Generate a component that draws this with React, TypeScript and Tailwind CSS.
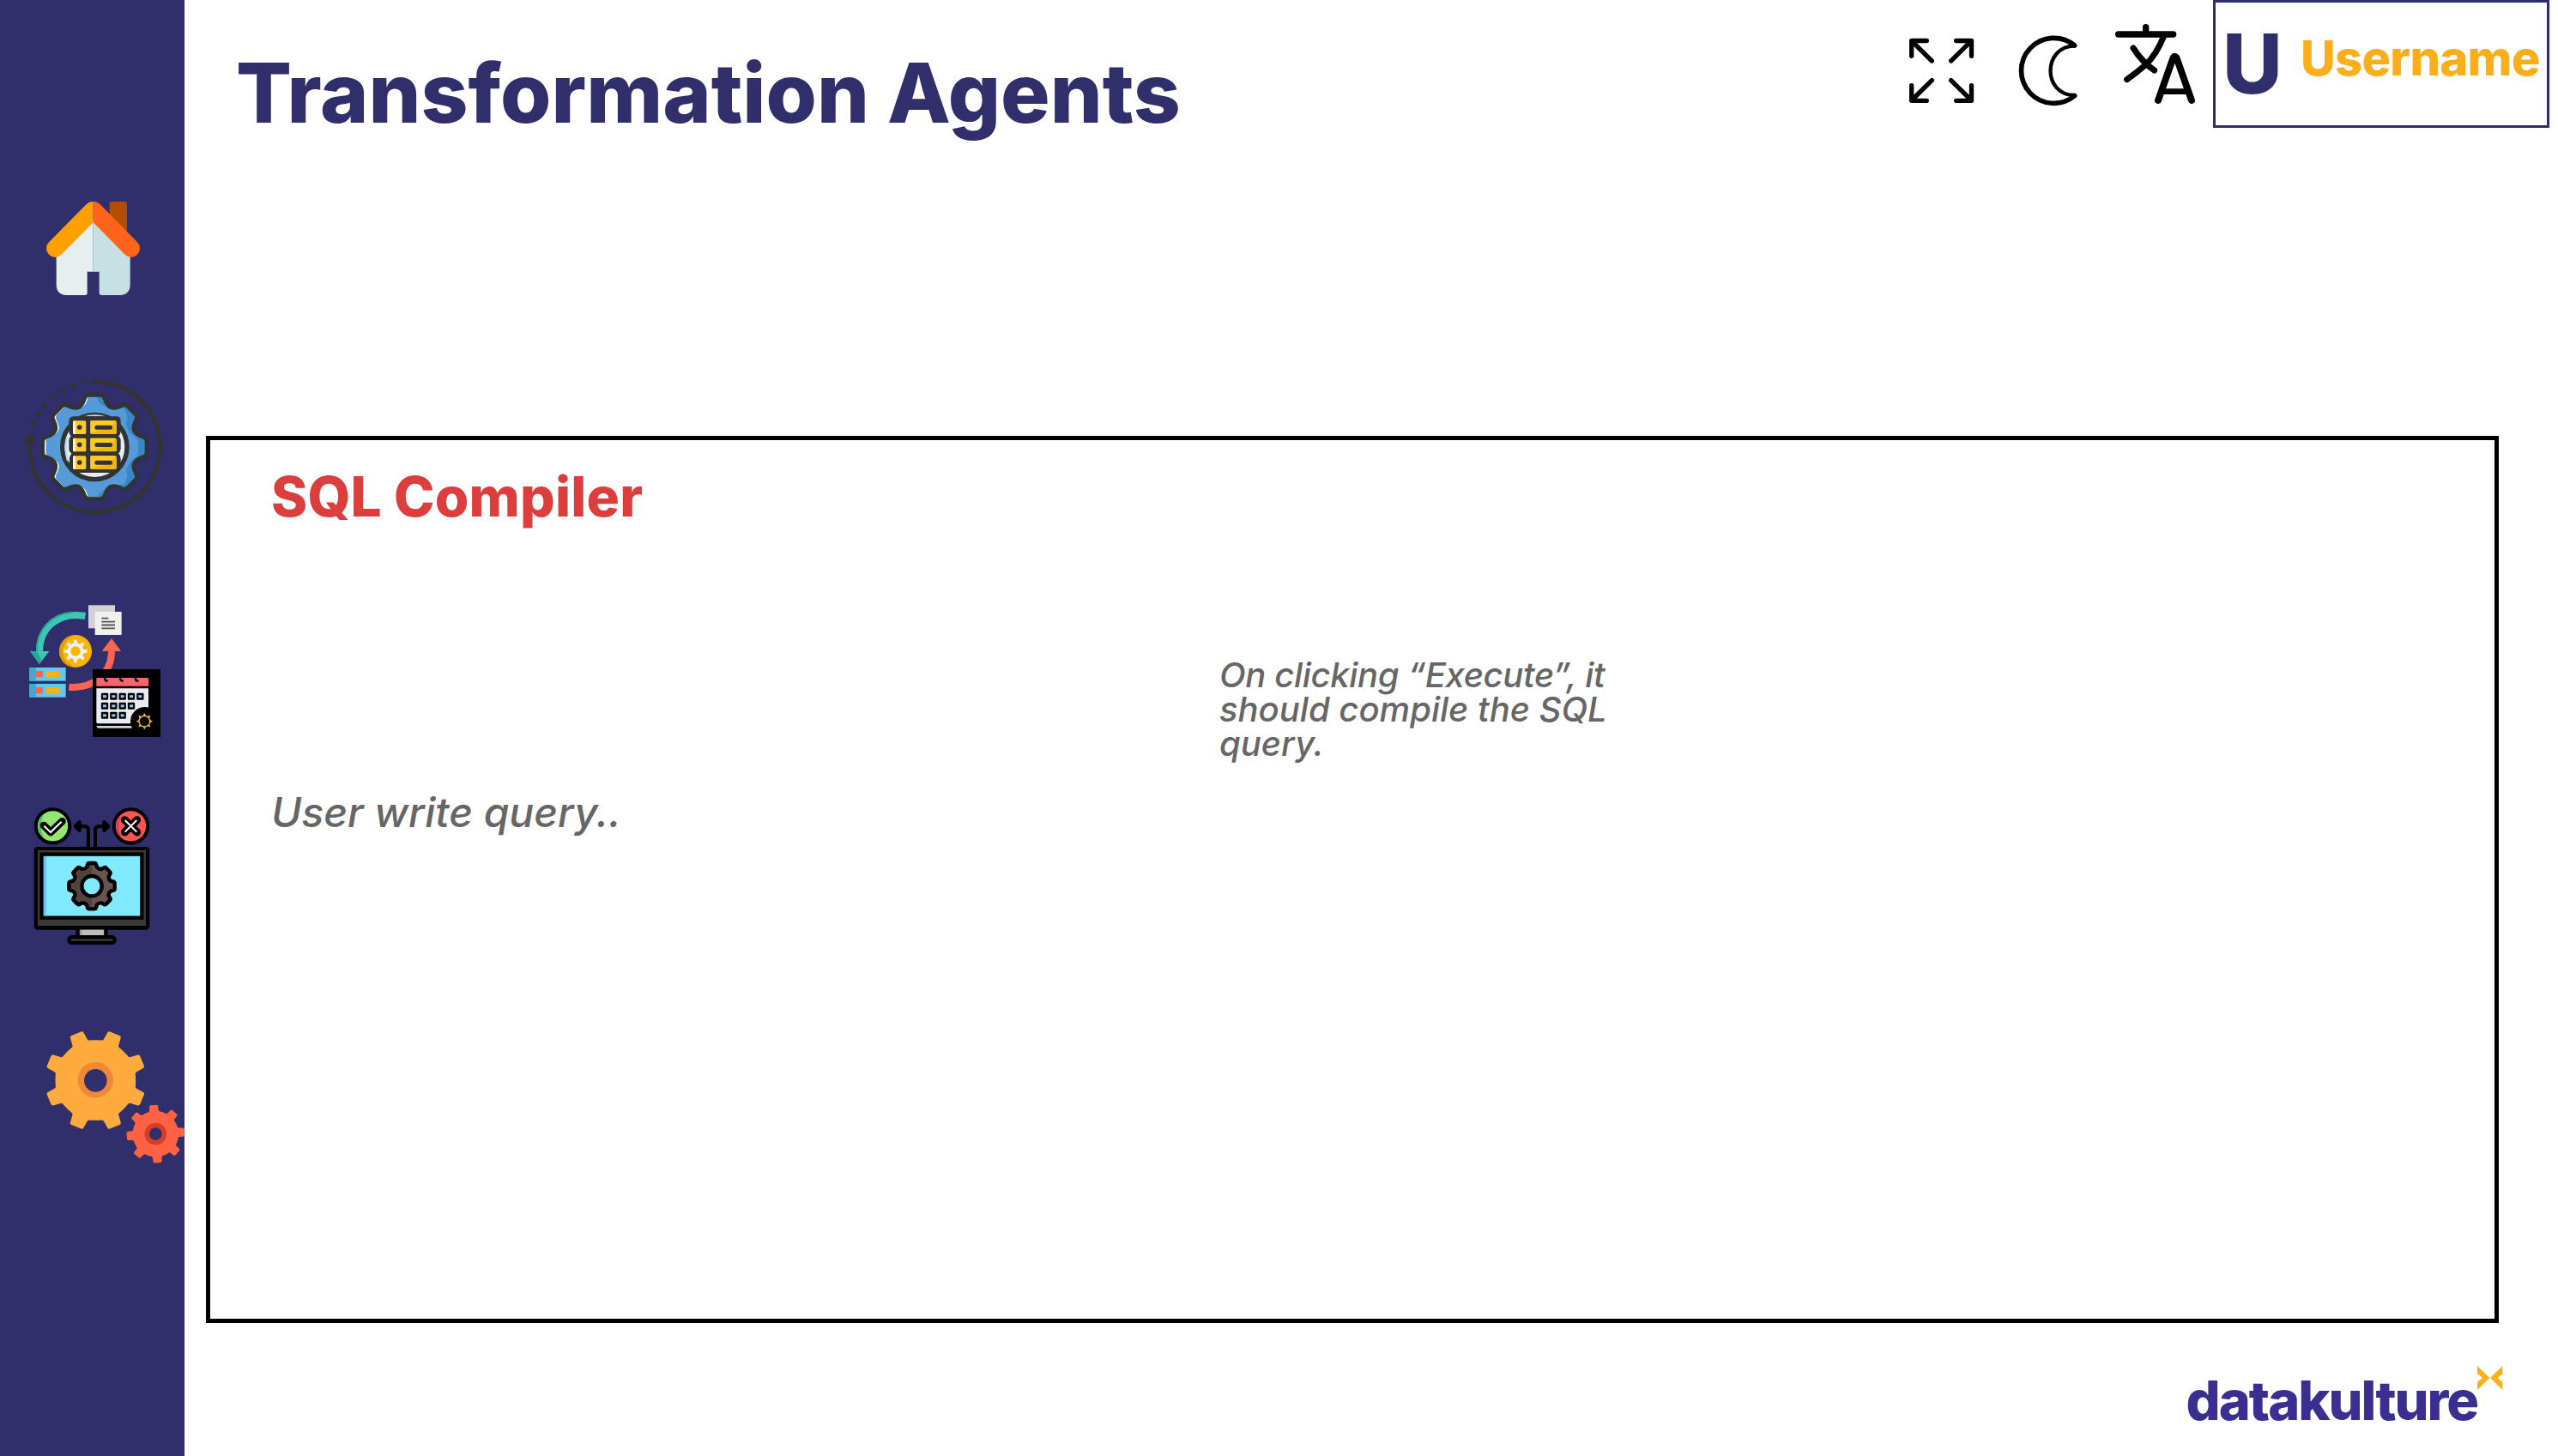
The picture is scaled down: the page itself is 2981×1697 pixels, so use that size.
import type { ReactNode } from "react";

type Seg = [string, ...number[]];

// Repeats a tooth outline (drawn pointing up, around the origin) n times around a centre.
function gear(cx: number, cy: number, n: number, offset: number, segs: Seg[]) {
  let d = "";
  for (let i = 0; i < n; i++) {
    const a = ((offset + (i * 360) / n) * Math.PI) / 180;
    segs.forEach(([cmd, ...p], j) => {
      d += i === 0 && j === 0 ? "M" : cmd;
      for (let k = 0; k < p.length; k += 2) {
        const x = p[k] * Math.cos(a) - p[k + 1] * Math.sin(a) + cx;
        const y = p[k] * Math.sin(a) + p[k + 1] * Math.cos(a) + cy;
        d += `${x.toFixed(2)} ${y.toFixed(2)} `;
      }
    });
  }
  return d + "Z";
}

const waveGear = gear(331, 303, 8, 0, [
  ["L", -36, -168],
  ["Q", -32, -182, -20, -182],
  ["L", 20, -182],
  ["Q", 32, -182, 36, -168],
  ["C", 46, -136, 63.7, -128.7, 93.3, -144.3],
]);

const monitorGear = gear(321, 338, 8, 0, [
  ["L", -18, -66],
  ["L", -15, -76],
  ["Q", -14, -80, -9, -80],
  ["L", 9, -80],
  ["Q", 14, -80, 15, -76],
  ["L", 18, -66],
  ["Q", 24, -58, 34, -59],
]);

const bigGear = gear(334, 237, 8, 22.5, [
  ["L", -33, -137],
  ["Q", -28, -139, -28, -144],
  ["L", -25, -170],
  ["Q", -24, -176, -18, -176],
  ["L", 18, -176],
  ["Q", 24, -176, 25, -170],
  ["L", 28, -144],
  ["Q", 28, -139, 33, -137],
  ["Q", 51, -132, 73, -121],
]);

const smallGear = gear(544, 425, 8, -4, [
  ["L", -19, -78],
  ["Q", -16, -79, -16, -83],
  ["L", -15, -97],
  ["Q", -14, -101, -10, -101],
  ["L", 10, -101],
  ["Q", 14, -101, 15, -97],
  ["L", 16, -83],
  ["Q", 16, -79, 19, -78],
  ["Q", 30, -75, 41, -69],
]);

function SideIcon({ h, children }: { h: number; children: ReactNode }) {
  return (
    <svg className="block w-[215px] shrink-0" viewBox={`0 0 645 ${h}`}>
      {children}
    </svg>
  );
}

function HomeIcon() {
  return (
    <SideIcon h={540}>
      <path d="M383 112Q383 105 390 105H437Q444 105 444 112V225L383 165Z" fill="#b34e00" />
      <path d="M197 290L326 165V348H305V424Q305 432 297 432H232Q197 429 197 395Z" fill="#e7efee" />
      <path d="M326 165L455 290V395Q455 429 420 432H355Q347 432 347 424V348H326Z" fill="#c6e0e4" />
      <path d="M326 104Q313 104 303 113L171 247A30 30 0 0 0 214 290L326 178Z" fill="#ff9f00" />
      <path d="M326 104Q339 104 349 113L480 247A30 30 0 0 1 437 290L326 178Z" fill="#ff641a" />
      <path d="M304 349.500H348" stroke="#a9b4bd" strokeWidth="3" />
    </SideIcon>
  );
}

function DataIcon() {
  return (
    <SideIcon h={600}>
      <defs>
        <clipPath id="wave">
          <path d={waveGear} />
        </clipPath>
        <clipPath id="lit">
          <path d="M140 100H336Q337 130 345 145Q355 160 385 168H430Q450 185 440 222Q450 262 480 275Q488 303 480 335Q450 350 440 385Q450 410 430 435H395Q345 450 332 500H140Z" />
        </clipPath>
      </defs>
      <path d="M331 75A228 228 0 1 1 104 303V266" fill="none" stroke="#333" strokeWidth="15" strokeLinecap="round" />
      <path d="M88 280L104 264L120 280" fill="none" stroke="#333" strokeWidth="14" strokeLinecap="round" strokeLinejoin="round" />
      <g stroke="#333" strokeWidth="15" strokeLinecap="round">
        <path d="M294 78L300 77M253 89L260 86M215 107L221 103M182 130L187 126M154 160L158 155M134 190L138 184M116 225L119 219" />
      </g>
      <g clipPath="url(#wave)">
        <path d={waveGear} fill="#fff" />
        <path d={waveGear} fill="#3787ca" transform="translate(12 0)" />
        <rect x="400" y="120" width="120" height="370" fill="#3787ca" />
        <g clipPath="url(#lit)">
          <path d={waveGear} fill="#559bd7" transform="translate(12 0)" />
          <rect x="350" y="120" width="170" height="370" fill="#559bd7" />
        </g>
      </g>
      <path d={waveGear} fill="none" stroke="#333" strokeWidth="14" strokeLinejoin="round" />
      <circle cx="331" cy="303" r="113" fill="#e3edf8" stroke="#333" strokeWidth="16" />
      <path d="M292 196Q331 183 370 196Z" fill="#b9d9f2" />
      <path d="M240 270Q224 303 241 350L233 350Q220 303 232 266Z" fill="#b9d9f2" />
      <path d="M258 196H406Q422 196 422 212V250Q420 262 414 265Q422 270 422 282V310Q420 322 414 325Q422 332 422 345V378L400 393H262L243 378V340L250 325Q241 320 241 310V280Q242 270 248 265Q241 258 241 246V212Q242 197 258 196Z" fill="#333" />
      {[210, 271, 333].map((y) => (
        <g key={y} transform={`translate(0 ${y})`}>
          <rect x="255" y="1" width="46" height="47" rx="5" fill="#ffc928" />
          <path d="M263 1H260Q255 1 255 6V43Q255 48 260 48H264Z" fill="#f6f1e4" />
          <rect x="316" y="1" width="92" height="47" rx="5" fill="#efb70a" />
          <path d="M316 1H403Q402 16 380 19L360 34Q340 36 318 46H316Z" fill="#ffc928" />
          <circle cx="278" cy="24" r="8.500" fill="#333" />
          <rect x="331" y="17" width="62" height="15" rx="7.500" fill="#333" />
        </g>
      ))}
    </SideIcon>
  );
}

function FlowIcon() {
  return (
    <SideIcon h={600}>
      <path d="M298 114C210 98 139 150 138 238" fill="none" stroke="#3ec6b4" strokeWidth="24" />
      <path d="M250 101C178 107 126 165 129 238" fill="none" stroke="#23a896" strokeWidth="6" />
      <path d="M105 237H172L138 282Z" fill="#3ec6b4" />
      <path d="M105 237H128L146 271L138 282Z" fill="#23a896" />
      <path d="M309 76H402V157H309Z" fill="#d2d2d2" />
      <path d="M332 99H425V180H332Z" fill="#f0f0f0" />
      <path d="M355 122H379M355 134H402M355 145.500H402M355 157H402" stroke="#555" strokeWidth="5.500" />
      <circle cx="264" cy="237" r="57" fill="#fdb400" />
      <path d="M264 180A57 57 0 0 0 264 294Q219 275 219 237T264 180Z" fill="#e09a00" />
      <circle cx="264" cy="237" r="23" fill="none" stroke="#f0f0f0" strokeWidth="12" />
      {[0, 45, 90, 135, 180, 225, 270, 315].map((a) => (
        <rect key={a} x="258" y="197" width="12" height="17" fill="#f0f0f0" transform={`rotate(${a} 264 237)`} />
      ))}
      {[294, 351].map((y) => (
        <g key={y} transform={`translate(0 ${y})`}>
          <rect x="103" width="127" height="47" fill="#65c6f0" />
          <rect x="103" width="23" height="47" fill="#47a7d2" />
          <rect x="126" y="12" width="24" height="22" fill="#fe6450" />
          <rect x="161" y="12" width="47" height="22" fill="#fdb400" />
        </g>
      ))}
      <path d="M241 362C320 370 390 320 390 236" fill="none" stroke="#fe6450" strokeWidth="24" />
      <path d="M356 237H423L390 192Z" fill="#fe6450" />
      <rect x="324" y="300" width="237" height="237" fill="#000" />
      <path d="M337 334Q337 330 341 330H515Q519 330 519 334V359H337Z" fill="#ff6370" />
      <path d="M337 367H519V440L460 490H342Q337 490 337 484Z" fill="#e9edf2" />
      <path d="M337 498H460L462 506H345Q338 505 337 498Z" fill="#cdd6d4" />
      <path d="M366 329Q366 340 375 341M420 329Q420 340 429 341M473 329Q473 340 482 341" fill="none" stroke="#000" strokeWidth="7" strokeLinecap="round" />
      {[
        [395, 5],
        [428.5, 4],
        [461.5, 3],
      ].map(([y, n]) =>
        Array.from({ length: n }, (_, i) => (
          <g key={`${y}-${i}`} transform={`translate(${366 + i * 31} ${y})`}>
            <rect x="-12.500" y="-12" width="25" height="24" rx="3" fill="#000" />
            <rect x="-6" y="-4.500" width="12" height="9" fill="#8fc6fb" />
          </g>
        )),
      )}
      <circle cx="506" cy="482" r="50" fill="#000" />
      <circle cx="505" cy="482" r="19" fill="none" stroke="#fcbc35" strokeWidth="4" />
      {[0, 45, 90, 135, 180, 225, 270, 315].map((a) => (
        <path key={a} d="M500 462L505 453L510 462Z" fill="#fcbc35" transform={`rotate(${a} 505 482)`} />
      ))}
    </SideIcon>
  );
}

function MonitorIcon() {
  return (
    <SideIcon h={600}>
      <circle cx="184.500" cy="128.500" r="59" fill="#94e671" stroke="#000" strokeWidth="12" />
      <path d="M153 86Q114 125 153 172Q132 130 153 86Z" fill="#3fbd80" />
      <path d="M153 126L177 150L217 112" fill="none" stroke="#000" strokeWidth="26" strokeLinecap="round" strokeLinejoin="round" />
      <path d="M154 128L177 150L215 113" fill="none" stroke="#fff" strokeWidth="6" />
      <circle cx="457.500" cy="128.500" r="59" fill="#ff5454" stroke="#000" strokeWidth="12" />
      <path d="M426 86Q387 125 426 172Q405 130 426 86Z" fill="#dc3a62" />
      <path d="M436 107L479 150M479 107L436 150" stroke="#000" strokeWidth="27" strokeLinecap="round" />
      <path d="M437 108L478 149M478 108L437 149" stroke="#fff" strokeWidth="6" />
      <path d="M309 205V143Q309 129 295 129H266M333 205V143Q333 129 347 129H376" fill="none" stroke="#000" strokeWidth="12" />
      <path d="M278 114L263 129L278 144ZM364 114L379 129L364 144Z" fill="#000" stroke="#000" strokeWidth="12" strokeLinejoin="round" />
      <rect x="125.500" y="207" width="391" height="277" rx="6" fill="#3a3a3a" stroke="#000" strokeWidth="12.500" />
      <rect x="146" y="227" width="350" height="222" fill="#80eaff" stroke="#000" strokeWidth="13" />
      <rect x="152" y="234" width="10" height="208" fill="#62c4fb" />
      <path d={monitorGear} fill="#685450" />
      <path d="M321 258H310L306 274L292 280L275 272L257 290L264 306L257 322L241 328V348L257 354L264 370L257 386L275 404L291 398L306 403L312 419H321Z" fill="#52433f" />
      <path d={monitorGear} fill="none" stroke="#000" strokeWidth="13" strokeLinejoin="round" />
      <circle cx="321" cy="338" r="35" fill="#80eaff" stroke="#000" strokeWidth="13" />
      <path d="M272 484H370V516H272Z" fill="#bdbdbd" />
      <path d="M279 484H286V516H279Z" fill="#999" />
      <path d="M272 486V516M370 486V516" stroke="#000" strokeWidth="13" />
      <path d="M126 484H516" stroke="#000" strokeWidth="12.500" />
      <rect x="241" y="516.500" width="160" height="20" rx="10" fill="#3a3a3a" stroke="#000" strokeWidth="13" />
    </SideIcon>
  );
}

function GearsIcon() {
  return (
    <SideIcon h={600}>
      <path d={bigGear} fill="#ffaa3c" />
      <circle cx="334" cy="236" r="62" fill="#f08838" />
      <circle cx="334" cy="238" r="40" fill="#302f6b" />
      <path d={smallGear} fill="#ff6243" />
      <circle cx="544" cy="425" r="38.500" fill="#d83e26" />
      <circle cx="544" cy="425" r="22" fill="#302f6b" />
    </SideIcon>
  );
}

function ExpandIcon() {
  return (
    <svg className="mt-11 h-[77px] w-[78px]" viewBox="72 132 234 231" fill="none" stroke="#000" strokeWidth="16" strokeLinecap="round" strokeLinejoin="round">
      <path d="M83 196V142.500H136M86 146L154 213M292.500 196V142.500H239M289 146L221 213M83 299V352H136M86 348L154 281M292.500 299V352H239M289 348L221 281" />
    </svg>
  );
}

function MoonIcon() {
  return (
    <svg className="ml-[50px] mt-10 h-[84px] w-[70px]" viewBox="456 120 210 252" fill="none" stroke="#000" strokeLinejoin="round" strokeLinecap="round">
      <path d="M653 159A114 114 0 1 0 653 335" strokeWidth="17" />
      <path d="M653 160C540 163 541 333 653 333" strokeWidth="13" />
    </svg>
  );
}

function TranslateIcon() {
  return (
    <svg className="ml-[42px] mt-7 h-[94px] w-24" viewBox="792 84 288 282" fill="none" stroke="#000" strokeLinejoin="round" strokeLinecap="round">
      <path d="M806 120H998M902 95V120" strokeWidth="22" />
      <path d="M966 124C948 168 930 200 902 226Q872 252 836 278M858 168Q890 218 932 246" strokeWidth="21" />
      <path d="M945 351L998 201Q1003 194 1009 201L1062 351" strokeWidth="24" />
      <path d="M960 320H1046" strokeWidth="20" />
    </svg>
  );
}

function Logo() {
  return (
    <div className="flex items-start">
      <span className="mt-[9px] text-[63px] leading-none font-extrabold tracking-[-2px] text-[#3b2e91]">datakulture</span>
      <svg className="h-7 w-[30px]" viewBox="0 0 90 84" fill="#fdb01a">
        <path d="M0 0L43 42L0 84V56L18 42L0 27ZM88 0L45 42L88 84V56L71 42L88 27Z" />
      </svg>
    </div>
  );
}

export default function App() {
  return (
    <div className="flex h-[1697px] w-[2981px] overflow-hidden bg-white font-['Inter',sans-serif]">
      <nav className="flex w-[215px] shrink-0 flex-col bg-[#302f6b] pt-[200px]">
        <HomeIcon />
        <div className="h-10" />
        <DataIcon />
        <div className="h-[60px]" />
        <FlowIcon />
        <div className="h-10" />
        <MonitorIcon />
        <div className="h-[60px]" />
        <GearsIcon />
      </nav>
      <main className="flex grow flex-col">
        <header className="flex h-[149px] items-start pr-[10px] pl-[60px]">
          <h1 className="mt-[60px] text-[96px] leading-none font-extrabold whitespace-nowrap text-[#302f6b]">Transformation Agents</h1>
          <div className="ml-auto flex items-start">
            <ExpandIcon />
            <MoonIcon />
            <TranslateIcon />
            <div className="ml-[19px] flex h-[149px] w-[392px] items-start border-[3px] border-[#302f6b] whitespace-nowrap">
              <span className="mt-[23px] ml-[8px] w-[88px] text-[96px] leading-none font-extrabold text-[#302f6b]">U</span>
              <span className="mt-[37px] ml-[3px] text-[56px] leading-none font-extrabold tracking-[-0.700px] text-[#fcae1a]">Username</span>
            </div>
          </div>
        </header>
        <section className="mt-[359px] ml-[25px] flex h-[1034px] w-[2672px] items-start border-[5px] border-black">
          <div className="flex w-[1176px] flex-col pl-[71px]">
            <h2 className="mt-[34px] text-[64px] leading-none font-extrabold tracking-[0.150px] text-[#dc3e3e]">SQL Compiler</h2>
            <p className="mt-[312px] text-[48px] leading-none font-medium tracking-[-0.050px] text-[#666] italic">User write query..</p>
          </div>
          <p className="mt-[254px] w-[480px] text-[40px] leading-none font-medium text-[#666] italic first-line:tracking-[-0.350px]">
            On clicking “Execute”, it should compile the SQL query.
          </p>
        </section>
        <footer className="mt-[50px] flex justify-end pr-[64px]">
          <Logo />
        </footer>
      </main>
    </div>
  );
}
